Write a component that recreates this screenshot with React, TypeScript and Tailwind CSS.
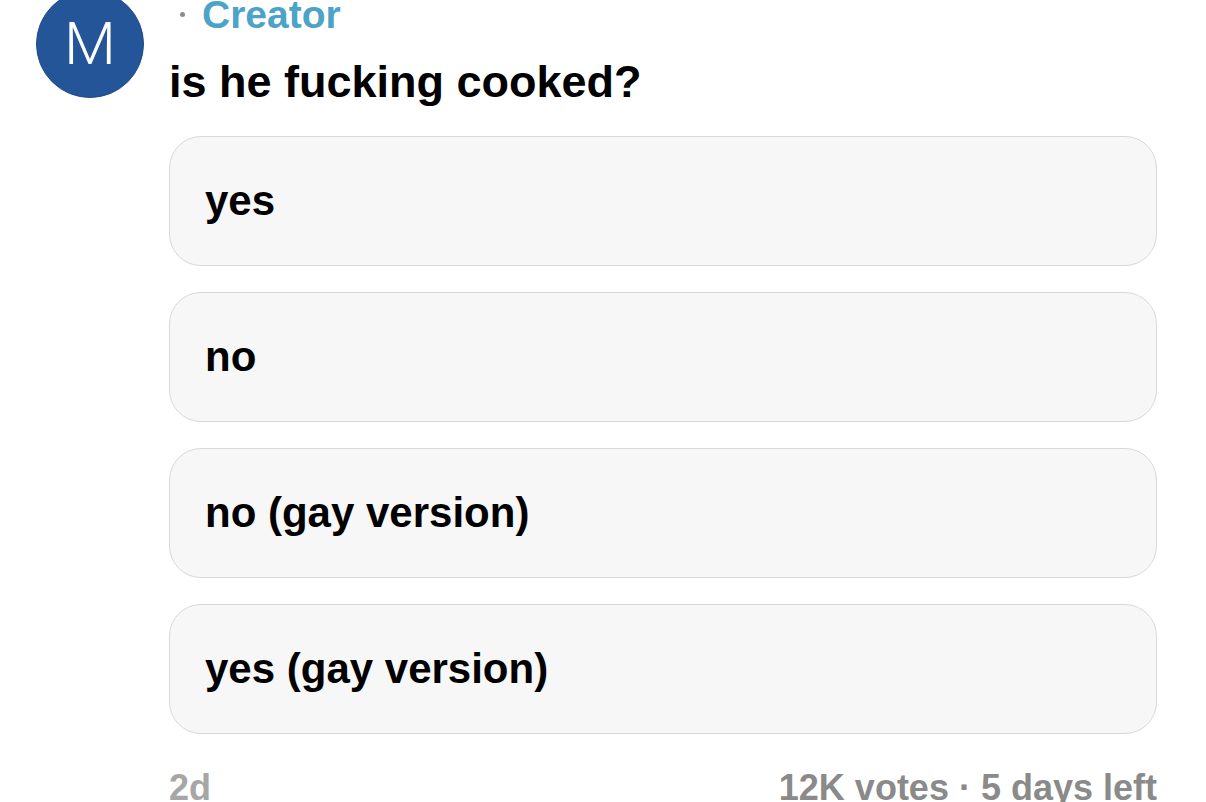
import React from "react";

const options = ["yes", "no", "no (gay version)", "yes (gay version)"];

export default function App() {
  return (
    <div className="w-[1206px] h-[802px] overflow-hidden bg-white font-['Liberation_Sans',Arial,sans-serif]">
      <div className="flex">
        {/* avatar */}
        <div className="pl-[36px] shrink-0">
          <div className="mt-[-10px] w-[108px] h-[108px] rounded-full bg-[#245598] border border-[#1f4c88] flex items-center justify-center">
            <span className="text-white text-[60px] leading-none font-light font-['Roboto',sans-serif]">M</span>
          </div>
        </div>

        {/* poll body */}
        <div className="ml-[25px] w-[988px] flex flex-col">
          <div className="mt-[-5px] flex items-center text-[39px] leading-[39px] font-bold">
            <span className="ml-[11px] mr-[17px] w-[5px] h-[5px] rounded-full bg-[#8c8c8c]" />
            <span className="text-[#4ba3c8]">Creator</span>
          </div>

          <h1 className="mt-[25px] text-[45px] leading-[45px] font-bold text-black">
            is he fucking cooked?
          </h1>

          <div className="mt-[32px] flex flex-col gap-[26px]">
            {options.map((opt) => (
              <div
                key={opt}
                className="h-[130px] rounded-[32px] border-[1.5px] border-[#d9d9d9] bg-[#f7f7f7] flex items-center pl-[35px]"
              >
                <span className="text-[42px] leading-none font-bold text-black">{opt}</span>
              </div>
            ))}
          </div>

          <div className="mt-[36px] flex justify-between text-[36px] leading-[36px] font-bold">
            <span className="text-[#a6a6a6]">2d</span>
            <span className="text-[#8a8a8a]">12K votes · 5 days left</span>
          </div>
        </div>
      </div>
    </div>
  );
}
